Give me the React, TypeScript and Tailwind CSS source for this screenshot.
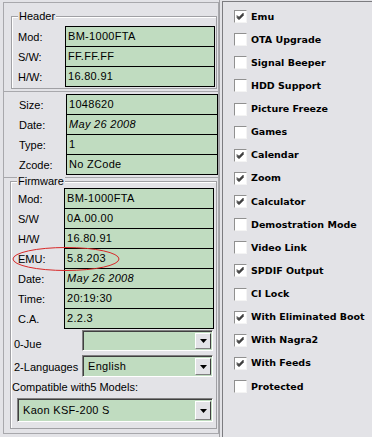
import React from 'react';

const BG = 'bg-[#e3e3e7]';
const FIELD = 'bg-[#c0dcc0]';

const features: [string, boolean][] = [
  ['Emu', true],
  ['OTA Upgrade', false],
  ['Signal Beeper', false],
  ['HDD Support', false],
  ['Picture Freeze', false],
  ['Games', false],
  ['Calendar', true],
  ['Zoom', true],
  ['Calculator', true],
  ['Demostration Mode', false],
  ['Video Link', false],
  ['SPDIF Output', true],
  ['CI Lock', false],
  ['With Eliminated Boot', true],
  ['With Nagra2', true],
  ['With Feeds', true],
  ['Protected', false],
];

const Row = ({
  label,
  value,
  first,
  italic,
  labelPad,
  fieldW,
}: {
  label: string;
  value: string;
  first?: boolean;
  italic?: boolean;
  labelPad: string;
  fieldW: string;
}) => (
  <div className={`flex h-[21px] ${first ? '' : '-mt-px'}`}>
    <div className={`${labelPad} w-[53px] shrink-0 pt-[5px] text-[11px] leading-[13px]`}>{label}</div>
    <div
      className={`${fieldW} h-[21px] border border-black ${FIELD} pl-[2px] pt-[3px] text-[11px] leading-[13px] tracking-[0.3px] ${
        italic ? 'italic' : ''
      }`}
    >
      {value}
    </div>
  </div>
);

const Arrow = () => (
  <div className="ml-auto flex h-full w-[16px] items-center justify-center border-t border-l border-b border-r border-t-white border-l-white border-b-[#808080] border-r-[#404040] bg-[#e3e3e7]">
    <svg width="7" height="4" viewBox="0 0 7 4">
      <path d="M0 0h7L3.5 4z" fill="#000" />
    </svg>
  </div>
);

const Combo = ({ value, w, h }: { value: string; w: string; h: string }) => (
  <div
    className={`${w} ${h} flex border-t border-l border-b border-r border-t-[#808080] border-l-[#808080] border-b-white border-r-white`}
  >
    <div
      className={`flex flex-1 items-stretch border-t border-l border-t-[#404040] border-l-[#404040] ${FIELD} p-px`}
    >
      <div className="flex-1 self-center pl-[3px] text-[11px] leading-[13px] tracking-[0.3px]">{value}</div>
      <Arrow />
    </div>
  </div>
);

const CheckBox = ({ on }: { on: boolean }) => (
  <div className="h-[13px] w-[13px] shrink-0 border-t border-l border-b border-r border-t-[#909090] border-l-[#909090] border-b-[#f4f4f4] border-r-[#f4f4f4] bg-white">
    {on && (
      <svg width="11" height="11" viewBox="0 0 11 11">
        <path d="M2 4.5l2 2 4.5-4.5M2 5.5l2 2 4.5-4.5M2 6.5l2 2 4.5-4.5" stroke="#000" strokeWidth="1" fill="none" />
      </svg>
    )}
  </div>
);

export default function App() {
  return (
    <div
      className={`flex h-[437px] w-[372px] overflow-hidden ${BG} text-black`}
      style={{ fontFamily: '"Liberation Sans", Arial, sans-serif' }}
    >
      {/* left column */}
      <div className="flex w-[220px] shrink-0 flex-col border-r border-[#a0a0a4]">
        {/* header panel */}
        <div className="ml-[3px] mt-[2px] h-[89px] w-[216px] border-t border-l border-r border-[#a8a8ac]">
          <div className="ml-[7px] mt-[13px] h-[73px] w-[206px] border border-[#a0a0a4] shadow-[inset_1px_1px_0_#fff]">
            <div className={`-mt-[8px] ml-[6px] h-[14px] w-fit ${BG} px-px text-[11px] leading-[14px]`}>Header</div>
            <div className="mt-[3px]">
              <Row first label="Mod:" value="BM-1000FTA" labelPad="pl-[6px]" fieldW="w-[150px]" />
              <Row label="S/W:" value="FF.FF.FF" labelPad="pl-[6px]" fieldW="w-[150px]" />
              <Row label="H/W:" value="16.80.91" labelPad="pl-[6px]" fieldW="w-[150px]" />
            </div>
          </div>
        </div>

        {/* size panel */}
        <div className="ml-[3px] h-[86px] w-[216px] border-t border-l border-r border-[#a8a8ac]">
          <div className="mt-[2px] pl-[1px]">
            <Row first label="Size:" value="1048620" labelPad="pl-[14px] w-[61px]" fieldW="w-[152px]" />
            <Row label="Date:" value="May 26 2008" italic labelPad="pl-[14px] w-[61px]" fieldW="w-[152px]" />
            <Row label="Type:" value="1" labelPad="pl-[14px] w-[61px]" fieldW="w-[152px]" />
            <Row label="Zcode:" value="No ZCode" labelPad="pl-[14px] w-[61px]" fieldW="w-[152px]" />
          </div>
        </div>

        {/* firmware panel */}
        <div className="ml-[3px] h-[257px] w-[216px] border border-[#a8a8ac]">
          <div className="relative ml-[6px] mt-[3px] h-[248px] w-[207px] border border-[#a0a0a4] shadow-[inset_1px_1px_0_#fff]">
            <div className={`-mt-[8px] ml-[6px] h-[14px] w-fit ${BG} px-px text-[11px] leading-[14px]`}>Firmware</div>
            <div>
              <Row first label="Mod:" value="BM-1000FTA" labelPad="pl-[7px]" fieldW="w-[150px]" />
              <Row label="S/W" value="0A.00.00" labelPad="pl-[7px]" fieldW="w-[150px]" />
              <Row label="H/W" value="16.80.91" labelPad="pl-[7px]" fieldW="w-[150px]" />
              <Row label="EMU:" value="5.8.203" labelPad="pl-[7px]" fieldW="w-[150px]" />
              <Row label="Date:" value="May 26 2008" italic labelPad="pl-[7px]" fieldW="w-[150px]" />
              <Row label="Time:" value="20:19:30" labelPad="pl-[7px]" fieldW="w-[150px]" />
              <Row label="C.A." value="2.2.3" labelPad="pl-[7px]" fieldW="w-[150px]" />
            </div>
            <div className="mt-[1px] flex h-[21px]">
              <div className="w-[71px] shrink-0 self-end pl-[3px] text-[11px] leading-[13px]">0-Jue</div>
              <Combo value="" w="w-[131px]" h="h-[21px]" />
            </div>
            <div className="mt-[4px] flex h-[22px]">
              <div className="w-[71px] shrink-0 self-center pl-[3px] pt-[2px] text-[11px] leading-[13px]">2-Languages</div>
              <Combo value="English" w="w-[131px]" h="h-[22px]" />
            </div>
            <div className="mt-[4px] h-[13px] pl-[1px] text-[11px] leading-[13px]">Compatible with5 Models:</div>
            <div className="ml-[6px] mt-[4px]">
              <Combo value="Kaon KSF-200 S" w="w-[196px]" h="h-[24px]" />
            </div>

            {/* red marker round EMU */}
            <svg className="absolute left-[1px] top-[64px]" width="108" height="26" viewBox="0 0 108 26">
              <ellipse cx="54" cy="13" rx="53" ry="11.5" fill="none" stroke="#d82828" strokeWidth="1" />
            </svg>
          </div>
        </div>
      </div>

      {/* right column */}
      <div className="ml-[2px] mt-[1px] flex-1 border-t border-l border-[#7c7c80] pt-[3px]">
        <div
          className="pl-[11px]"
          style={{ fontFamily: '"DejaVu Sans", Verdana, sans-serif' }}
        >
          {features.map(([name, on]) => (
            <div key={name} className="flex h-[23.125px] items-center">
              <CheckBox on={on} />
              <span className="ml-[4px] whitespace-nowrap text-[9.5px] font-bold leading-[12px]">{name}</span>
            </div>
          ))}
        </div>
      </div>
    </div>
  );
}
